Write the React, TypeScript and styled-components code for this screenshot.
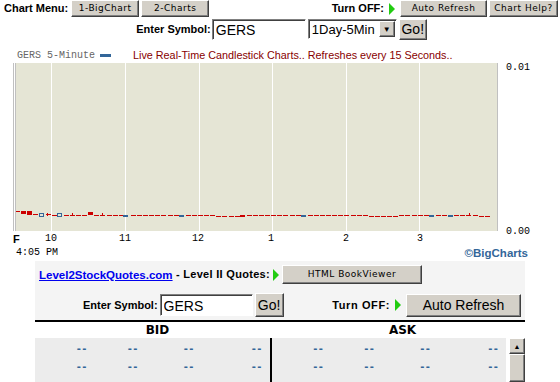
import styled, { createGlobalStyle } from 'styled-components';

const GlobalStyle = createGlobalStyle`
  html, body {
    margin: 0;
    padding: 0;
    background: #ffffff;
  }
  body {
    width: 560px;
    height: 382px;
    overflow: hidden;
    font-family: "Liberation Sans", Arial, sans-serif;
  }
`;

const PLOT_X = 16;
const PLOT_Y = 63;
const GRID = [51, 125, 199, 272, 346, 419];
const X_LABELS = [
  { x: 51, text: '10' },
  { x: 125, text: '11' },
  { x: 198, text: '12' },
  { x: 271, text: '1' },
  { x: 346, text: '2' },
  { x: 420, text: '3' },
];

type Candle = { x: number; y: number; h: number; kind: 'red' | 'blue' | 'hollow' };

const CANDLES: Candle[] = [
  { x: 21, y: 211, h: 3, kind: 'red' },
  { x: 27, y: 211, h: 4, kind: 'red' },
  { x: 39, y: 213, h: 3, kind: 'hollow' },
  { x: 57, y: 213, h: 3, kind: 'hollow' },
  { x: 88, y: 212, h: 3, kind: 'red' },
  { x: 123, y: 215, h: 2, kind: 'blue' },
  { x: 179, y: 215, h: 2, kind: 'blue' },
  { x: 240, y: 215, h: 2, kind: 'red' },
  { x: 301, y: 215, h: 2, kind: 'blue' },
  { x: 429, y: 215, h: 2, kind: 'blue' },
  { x: 448, y: 215, h: 2, kind: 'blue' },
];
const TICKS = [47, 72, 102, 469];

const dashLevel = (x: number) => {
  if (x < 21) return 211;
  if (x < 50) return 214;
  if ((x >= 214 && x < 236) || (x >= 366 && x < 394) || x >= 476) return 216;
  return 215;
};

const DASHES = Array.from({ length: 80 }, (_, i) => Math.round(15 + i * 6.1)).filter(
  (x) => x <= 490 && !CANDLES.some((c) => Math.abs(c.x - x) < 4)
);

const BOOK_ROWS = [0, 1];

const App = () => {
  return (
    <>
      <GlobalStyle />
      <Page>
        <TopBar>
          <Label>Chart Menu:</Label>
          <WinButton $w={68} $h={17}>1-BigChart</WinButton>
          <WinButton $w={68} $h={17}>2-Charts</WinButton>
          <Spacer />
          <Label>Turn OFF:</Label>
          <Arrow />
          <WinButton $w={87} $h={17}>Auto Refresh</WinButton>
          <WinButton $w={69} $h={17}>Chart Help?</WinButton>
        </TopBar>

        <SymbolRow>
          <Label>Enter Symbol:</Label>
          <TextBox $w={94} $h={21} defaultValue="GERS" readOnly />
          <Select>
            <span>1Day-5Min</span>
            <SelectArrow>▼</SelectArrow>
          </Select>
          <WinButton $w={28} $h={21} $big>Go!</WinButton>
        </SymbolRow>

        <ChartHead>
          <Legend>GERS 5-Minute</Legend>
          <Swatch />
          <LiveText>Live Real-Time Candlestick Charts.. Refreshes every 15 Seconds..</LiveText>
        </ChartHead>

        <PlotRow>
          <Plot>
            <svg width={481} height={168} shapeRendering="crispEdges">
              <rect x={0} y={0} width={481} height={168} fill="#e5e5d5" />
              {GRID.map((g) => (
                <rect key={g} x={g - PLOT_X} y={0} width={1} height={168} fill="#ffffff" />
              ))}
              {DASHES.map((x) => (
                <rect key={x} x={x - PLOT_X} y={dashLevel(x) - PLOT_Y} width={5} height={1} fill="#cc0000" />
              ))}
              {TICKS.map((x) => (
                <rect key={x} x={x - PLOT_X} y={213 - PLOT_Y} width={1} height={3} fill="#cc0000" />
              ))}
              {CANDLES.map((c) =>
                c.kind === 'hollow' ? (
                  <rect
                    key={c.x}
                    x={c.x - PLOT_X + 0.5}
                    y={c.y - PLOT_Y + 0.5}
                    width={4}
                    height={c.h}
                    fill="none"
                    stroke="#336699"
                    strokeWidth={1}
                    shapeRendering="auto"
                  />
                ) : (
                  <rect
                    key={c.x}
                    x={c.x - PLOT_X}
                    y={c.y - PLOT_Y}
                    width={5}
                    height={c.h}
                    fill={c.kind === 'red' ? '#cc0000' : '#336699'}
                  />
                )
              )}
            </svg>
          </Plot>
          <YAxis>
            <AxisText>0.01</AxisText>
            <AxisText>0.00</AxisText>
          </YAxis>
        </PlotRow>

        <XAxis>
          <XLabel $x={13} $bold>F</XLabel>
          {X_LABELS.map((l) => (
            <XLabel key={l.text} $x={l.x} $center>
              {l.text}
            </XLabel>
          ))}
        </XAxis>

        <ChartFoot>
          <AxisText>4:05 PM</AxisText>
          <Brand>©BigCharts</Brand>
        </ChartFoot>

        <Panel>
          <PanelRow>
            <SiteLink href="#">Level2StockQuotes.com</SiteLink>
            <Label $track={0.3}>&nbsp;- Level II Quotes:</Label>
            <Arrow />
            <WinButton $w={140} $h={19}>HTML BookViewer</WinButton>
          </PanelRow>
          <FormRow>
            <Label>Enter Symbol:</Label>
            <TextBox $w={93} $h={22} defaultValue="GERS" readOnly />
            <WinButton $w={29} $h={24} $big>Go!</WinButton>
            <Spacer />
            <Label $track={0.6}>Turn OFF:</Label>
            <Arrow />
            <WinButton $w={115} $h={23} $big>Auto Refresh</WinButton>
          </FormRow>
        </Panel>

        <BookHead>
          <span>BID</span>
          <span>ASK</span>
        </BookHead>

        <BookBody>
          <Book>
            <Side>
              {BOOK_ROWS.map((r) => (
                <QuoteRow key={r}>
                  <Cell>--</Cell>
                  <Cell>--</Cell>
                  <Cell>--</Cell>
                  <Cell>--</Cell>
                </QuoteRow>
              ))}
            </Side>
            <Divider />
            <Side>
              {BOOK_ROWS.map((r) => (
                <QuoteRow key={r}>
                  <Cell>--</Cell>
                  <Cell>--</Cell>
                  <Cell>--</Cell>
                  <Cell>--</Cell>
                </QuoteRow>
              ))}
            </Side>
          </Book>
          <ScrollBar>
            <ScrollUp>▲</ScrollUp>
            <Thumb />
          </ScrollBar>
        </BookBody>
      </Page>
    </>
  );
};

export default App;

const Page = styled.div`
  width: 560px;
  height: 382px;
  overflow: hidden;
  display: flex;
  flex-direction: column;
`;

const TopBar = styled.div`
  display: flex;
  align-items: flex-start;
  gap: 2px;
  height: 18px;
  padding: 0 2px 0 4px;

  > span:first-child {
    margin-right: 1px;
  }
`;

const Spacer = styled.div`
  flex: 1;
`;

const Label = styled.span<{ $track?: number }>`
  font-family: "Liberation Sans", Arial, sans-serif;
  font-weight: 700;
  font-size: 11px;
  letter-spacing: ${(p) => p.$track ?? 0}px;
  color: #000000;
  line-height: 17px;
  white-space: nowrap;
`;

const Arrow = styled.span`
  display: inline-block;
  width: 0;
  height: 0;
  margin: 0 3px;
  align-self: center;
  border-top: 6px solid transparent;
  border-bottom: 6px solid transparent;
  border-left: 6px solid #22cc11;
`;

const WinButton = styled.button<{ $w: number; $h: number; $big?: boolean }>`
  box-sizing: border-box;
  flex: none;
  width: ${(p) => p.$w}px;
  height: ${(p) => p.$h}px;
  margin: 0;
  padding: 0;
  background: #d4d0c8;
  border: 1px solid;
  border-color: #ffffff #404040 #404040 #ffffff;
  box-shadow: inset -1px -1px 0 #808080;
  color: #000000;
  font-family: ${(p) =>
    p.$big ? '"Liberation Sans", Arial, sans-serif' : '"DejaVu Sans", Verdana, sans-serif'};
  font-size: ${(p) => (p.$big ? 14 : 9)}px;
  letter-spacing: ${(p) => (p.$big ? 0 : 0.5)}px;
  line-height: 1;
  white-space: nowrap;
  cursor: pointer;
`;

const SymbolRow = styled.div`
  display: flex;
  align-items: center;
  justify-content: center;
  gap: 2px;
  height: 22px;
  padding-left: 3px;

  > span:first-child {
    margin-right: -1px;
  }
`;

const TextBox = styled.input<{ $w: number; $h: number }>`
  box-sizing: border-box;
  width: ${(p) => p.$w}px;
  height: ${(p) => p.$h}px;
  margin: 0;
  padding: 1px 3px 0;
  border: 1px solid;
  border-color: #808080 #ffffff #ffffff #808080;
  box-shadow: inset 1px 1px 0 #404040;
  background: #ffffff;
  font-family: "Liberation Sans", Arial, sans-serif;
  font-size: 14px;
  color: #000000;
  outline: none;
`;

const Select = styled.div`
  box-sizing: border-box;
  display: flex;
  align-items: center;
  justify-content: space-between;
  width: 89px;
  height: 20px;
  padding: 0 1px 0 3px;
  border: 1px solid;
  border-color: #808080 #ffffff #ffffff #808080;
  box-shadow: inset 1px 1px 0 #404040;
  background: #ffffff;
  font-family: "Liberation Sans", Arial, sans-serif;
  font-size: 13px;
`;

const SelectArrow = styled.span`
  box-sizing: border-box;
  display: flex;
  align-items: center;
  justify-content: center;
  width: 16px;
  height: 16px;
  background: #d4d0c8;
  border: 1px solid;
  border-color: #ffffff #404040 #404040 #ffffff;
  box-shadow: inset -1px -1px 0 #808080;
  font-size: 8px;
  color: #000000;
`;

const ChartHead = styled.div`
  display: flex;
  align-items: center;
  height: 12px;
  margin-top: 9px;
  margin-bottom: 2px;
  padding-left: 17px;
`;

const Legend = styled.span`
  font-family: "Liberation Mono", "DejaVu Sans Mono", monospace;
  font-size: 10px;
  color: #666666;
`;

const Swatch = styled.span`
  width: 11px;
  height: 3px;
  margin-left: 5px;
  background: #336699;
`;

const LiveText = styled.span`
  margin-left: 22px;
  font-family: "Liberation Sans", Arial, sans-serif;
  font-size: 10.8px;
  color: #880000;
  white-space: nowrap;
`;

const PlotRow = styled.div`
  display: flex;
  height: 168px;
  padding-left: 13px;
`;

const Plot = styled.div`
  display: flex;
  border-left: 3px double #c0c0c0;
  border-right: 1px solid #c0c0c0;

  svg {
    display: block;
  }
`;

const YAxis = styled.div`
  display: flex;
  flex-direction: column;
  justify-content: space-between;
  margin-left: 8px;
  margin-bottom: -6px;
`;

const AxisText = styled.span`
  font-family: "Liberation Mono", "DejaVu Sans Mono", monospace;
  font-size: 10px;
  line-height: 10px;
  color: #000000;
  white-space: nowrap;
`;

const XAxis = styled.div`
  position: relative;
  height: 14px;
`;

const XLabel = styled.span<{ $x: number; $bold?: boolean; $center?: boolean }>`
  position: absolute;
  top: 3px;
  left: ${(p) => p.$x}px;
  transform: ${(p) => (p.$center ? 'translateX(-50%)' : 'none')};
  font-family: ${(p) =>
    p.$bold ? '"Liberation Sans", Arial, sans-serif' : '"Liberation Mono", "DejaVu Sans Mono", monospace'};
  font-weight: ${(p) => (p.$bold ? 700 : 400)};
  font-size: ${(p) => (p.$bold ? 11 : 10)}px;
  line-height: 10px;
  color: #000000;
`;

const ChartFoot = styled.div`
  display: flex;
  align-items: center;
  justify-content: space-between;
  height: 14px;
  padding: 1px 32px 0 16px;
`;

const Brand = styled.span`
  font-family: "Liberation Sans", Arial, sans-serif;
  font-weight: 700;
  font-size: 11.5px;
  color: #336699;
`;

const Panel = styled.div`
  margin: 1px 35px 0;
  padding: 4px 4px 3px;
  background: #f4f4f4;
  border-bottom: 2px solid #000000;
`;

const PanelRow = styled.div`
  display: flex;
  align-items: center;
  height: 19px;
`;

const SiteLink = styled.a`
  font-family: "Liberation Sans", Arial, sans-serif;
  font-weight: 700;
  font-size: 11.5px;
  color: #0000ee;
  text-decoration: underline;
`;

const FormRow = styled.div`
  display: flex;
  align-items: center;
  gap: 2px;
  height: 24px;
  margin-top: 9px;
  padding-left: 44px;
`;

const BookHead = styled.div`
  display: grid;
  grid-template-columns: 1fr 1fr;
  height: 16px;
  margin: 0 35px;
  align-items: center;
  font-family: "DejaVu Sans", Verdana, sans-serif;
  font-weight: 700;
  font-size: 12px;
  text-align: center;
  color: #000000;
`;

const BookBody = styled.div`
  display: flex;
  flex: 1;
  margin-left: 35px;
`;

const Book = styled.div`
  display: flex;
  width: 471px;
  background: #ececec;
`;

const Side = styled.div`
  width: 235px;
  padding-top: 1px;
`;

const Divider = styled.div`
  width: 2px;
  background: #000000;
`;

const QuoteRow = styled.div`
  display: grid;
  grid-template-columns: 53px 51px 56px 68px;
  height: 18px;
  align-items: center;
`;

const Cell = styled.span`
  text-align: right;
  font-family: "DejaVu Sans", Verdana, sans-serif;
  font-weight: 700;
  font-size: 10px;
  letter-spacing: 1.5px;
  color: #336699;
`;

const ScrollBar = styled.div`
  display: flex;
  flex-direction: column;
  width: 16px;
  margin-left: 3px;
`;

const ScrollUp = styled.div`
  box-sizing: border-box;
  display: flex;
  align-items: center;
  justify-content: center;
  height: 16px;
  background: #d4d0c8;
  border: 1px solid;
  border-color: #ffffff #404040 #404040 #ffffff;
  box-shadow: inset -1px -1px 0 #808080;
  font-size: 7px;
  color: #000000;
`;

const Thumb = styled.div`
  box-sizing: border-box;
  flex: 1;
  background: #d4d0c8;
  border: 1px solid;
  border-color: #ffffff #404040 #404040 #ffffff;
  box-shadow: inset -1px -1px 0 #808080;
`;
